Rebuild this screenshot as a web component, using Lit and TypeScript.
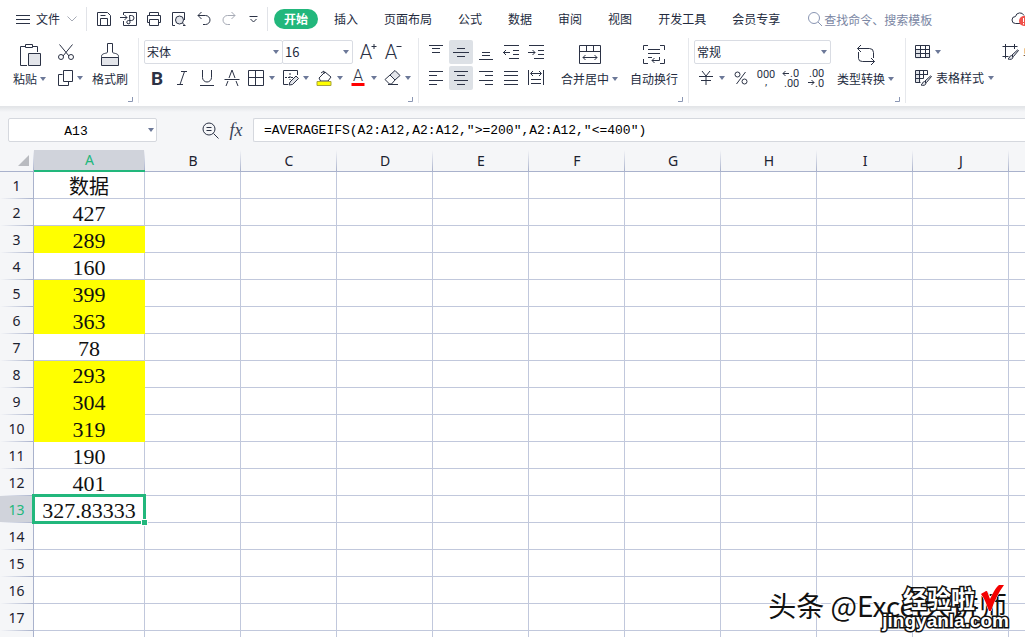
import { LitElement, html, css, svg, TemplateResult, SVGTemplateResult } from "lit";
import { customElement, property, state } from "lit/decorators.js";
import { classMap } from "lit/directives/class-map.js";

const glyph = (w: number, h: number, body: SVGTemplateResult): TemplateResult => html`
  <svg class="glyph" width=${w} height=${h} viewBox="0 0 ${w} ${h}" aria-hidden="true">${body}</svg>`;

const caret = html`<svg class="caret" width="6" height="4" viewBox="0 0 6 4" aria-hidden="true"><path d="M0 0h6L3 4z"/></svg>`;

const icons = {
  menu: glyph(14, 11, svg`<path d="M0 1.500h14M0 5.500h14M0 9.500h14"/>`),
  chevron: glyph(10, 6, svg`<path class="dim" d="M.5.5 5 5 9.5.5"/>`),
  save: glyph(16, 16, svg`<path d="M1.500 1.500h10l3 3v10h-13zM4.500 14.500v-7h7v7M4.500 4.500h5"/>`),
  exportPdf: glyph(18, 16, svg`<path d="M3.500 4V1.500h13v13h-13V10M0 6.500h7M4.500 4l2.500 2.500-2.500 2.500M9.500 4.500h2a2 2 0 0 1 0 5h-3a1.700 1.700 0 1 0 1.500 2.500z"/>`),
  print: glyph(16, 16, svg`<path d="M3.500 4.500v-3h9v3M3.500 11.500h-2v-7h13v7h-2M3.500 8.500h9v6h-9z"/>`),
  preview: glyph(16, 16, svg`<path d="M4 14.500H1.500v-13h12V9M12 14.500h2"/><circle class="soft" cx="8.500" cy="9" r="4"/><path d="m11.500 12 3 3"/>`),
  undo: glyph(16, 16, svg`<path d="M5.500 1 2 4.500 5.500 8M2 4.500h7.500a4.500 4.500 0 0 1 0 9H7"/>`),
  redo: glyph(16, 16, svg`<path class="dim" d="M10.500 1 14 4.500 10.500 8M14 4.500H6.500a4.500 4.500 0 0 0 0 9H9"/>`),
  more: glyph(9, 8, svg`<path d="M.500 1.500h8M1.500 4 4.500 7l3-3"/>`),
  search: glyph(16, 16, svg`<circle class="blue" cx="7" cy="7" r="5.500"/><path class="blue" d="m11 11 4 4"/>`),
  cloud: glyph(20, 16, svg`<path d="M9 12.500H4.500a3.500 3.500 0 0 1 0-7 4.500 4.500 0 0 1 8.500-1"/><circle class="alert" cx="13" cy="10" r="5"/><path class="alertmark" d="M12.500 7v4M12.500 12v1.500"/>`),
  paste: glyph(24, 24, svg`<path d="M9 22.500H2.500v-19h17V9"/><path class="paper" d="M7.500 1.500h7v3h-7z"/><path class="soft" d="M10.500 10.500h12v12h-12z"/>`),
  cut: glyph(18, 18, svg`<path d="M2.500 1.500 12 13M15.500 1.500 6 13"/><circle cx="4" cy="14" r="2.500"/><circle cx="14" cy="14" r="2.500"/>`),
  copy: glyph(16, 16, svg`<path d="M4.500 4.500h-4v11h10v-4M5.500.500h9v11h-9z"/>`),
  brush: glyph(20, 26, svg`<path d="M7.500 10V1.500h5V10c0 2 6 .500 6 4.500v1h-17v-1C1.500 10.500 7.500 12 7.500 10z"/><path class="soft" d="M1.500 15.500h17v8h-17z"/>`),
  bold: glyph(16, 18, svg`<text class="t-bold" x="8" y="16" text-anchor="middle">B</text>`),
  italic: glyph(16, 18, svg`<path d="M7 2.500h6M3 15.500h6M10.500 2.500l-4.500 13"/>`),
  underline: glyph(16, 18, svg`<path d="M3.500 1v7.500a4.500 4.500 0 0 0 9 0V1M1 16.500h14"/>`),
  strike: glyph(16, 18, svg`<path d="M8 1 5 9M8 1l3 8M4 12l-2 5M12 12l2 5M.500 10.500h15"/>`),
  border: glyph(16, 16, svg`<path d="M.500.500h15v15H.500zM7.500.500v15M.500 7.500h15"/>`),
  drawBorder: glyph(17, 16, svg`<path d="M15.500 5V.500h-14v14H6"/><path class="dots" d="M3 7.500h8M8 3v7"/><path class="soft" d="m8 12 6-6 2.500 2.500-6 6L7 15z"/>`),
  fill: glyph(16, 17, svg`<path d="m3 8 6-6 6 5-3 4H4.500zM5 3l3-2v3"/><path class="yellow" d="M1 11.500h14v4H1z"/>`),
  fontColor: glyph(16, 17, svg`<text class="t-small" x="8" y="11" text-anchor="middle">A</text><path class="red" d="M1.500 13h13v3h-13z"/>`),
  eraser: glyph(17, 16, svg`<path class="soft" d="m6 5 5-4.500 5 5L11 10z"/><path d="M6 5 1 9.500l4.500 4.500h2L11 10M4 14.500h10"/>`),
  bigger: glyph(18, 18, svg`<text class="t-font" x="8" y="16" text-anchor="middle">A</text><path d="M13.500 3.500h5M16 1v5"/>`),
  smaller: glyph(18, 18, svg`<text class="t-font" x="8" y="16" text-anchor="middle">A</text><path d="M13.500 3.500h5"/>`),
  top: glyph(16, 16, svg`<path d="M1 1.500h14M4 4.500h8M4 8.500h8"/>`),
  middle: glyph(16, 16, svg`<path d="M4 4.500h8M0 8.500h16M4 12.500h8"/>`),
  bottom: glyph(16, 16, svg`<path d="M4 8.500h8M4 11.500h8M1 15.500h14"/>`),
  outdent: glyph(16, 16, svg`<path d="M1 1.500h15M10 6.500h6M10 10.500h6M6 14.500h10M0 8.500h7M3 6 .500 8.500 3 11"/>`),
  indent: glyph(16, 16, svg`<path d="M1 1.500h15M10 6.500h6M10 10.500h6M6 14.500h10M0 8.500h7M4.500 6 7 8.500 4.500 11"/>`),
  left: glyph(16, 16, svg`<path d="M1 1.500h14M1 5.500h8M1 10.500h14M1 14.500h8"/>`),
  center: glyph(16, 16, svg`<path d="M1 1.500h14M4 5.500h8M1 10.500h14M4 14.500h8"/>`),
  right: glyph(16, 16, svg`<path d="M1 1.500h14M7 5.500h8M1 10.500h14M7 14.500h8"/>`),
  justify: glyph(16, 16, svg`<path d="M1 1.500h14M1 5.500h14M1 10.500h14M1 14.500h14"/>`),
  distribute: glyph(16, 16, svg`<path d="M.500 0v15M15.500 0v15M3 3.500h10M5 1 2.500 3.500 5 6M11 1l2.500 2.500L11 6M3 9.500h10M3 13.500h10"/>`),
  merge: glyph(22, 20, svg`<path d="M.500.500h21v18H.500zM.500 6.500h21M7.500.500v6M14.500.500v6M4 12.500h14M6.500 10 4 12.500 6.500 15M15.500 10l2.500 2.500-2.500 2.500"/>`),
  wrap: glyph(22, 20, svg`<path d="M5 .500H.500V5M17 .500h4.500V5M.500 14v4.500H5M21.500 14v4.500H17M5 4.500h12M5 8.500h12M5 12.500h4M16.500 12v3.500H9M11.500 13 9 15.500l2.500 2.500"/>`),
  yen: glyph(14, 16, svg`<path d="m3 1 4 5 4-5M0 6.500h14M2 10.500h10M7 6v9"/>`),
  percent: glyph(14, 14, svg`<circle cx="3.500" cy="3.500" r="2.500"/><circle cx="10.500" cy="10.500" r="2.500"/><path d="M11.500 1 2.500 13"/>`),
  thousands: glyph(20, 18, svg`<text class="t-num" x="10" y="9" text-anchor="middle">000</text><text class="t-num" x="10" y="16" text-anchor="middle">,</text>`),
  decUp: glyph(18, 18, svg`<path d="M1 4.500h6M3.500 2 1 4.500 3.500 7"/><text class="t-num" x="8" y="8">.0</text><text class="t-num" x="2" y="18">.00</text>`),
  decDown: glyph(18, 18, svg`<text class="t-num" x="2" y="8">.00</text><path d="M1 13.500h6M4.500 11 7 13.500 4.500 16"/><text class="t-num" x="8" y="18">.0</text>`),
  convert: glyph(20, 22, svg`<path d="M5 1 1.500 4.500 5 8M1.500 4.500h12q4 0 4 4V14M2.500 8v6.500q0 3 4 3h12M15 14l3.500 3.500L15 21"/>`),
  tableFmt: glyph(16, 14, svg`<path class="softfill" d="M.500 4.500h5v9h-5zM10.500 9h5v4h-5z"/><path d="M.500.500h14v12H.500zM.500 4.500h14M.500 8.500h14M5.500.500v4M10.500.500v8M5.500 4.500v8M10.500 4.500v8"/>`),
  tableStyle: glyph(17, 17, svg`<path class="softfill" d="M.500.500h5v12h-5z"/><path d="M12.500 5V.500H.500v12h5M.500 4.500h12M.500 8.500h8M4.500.500v12M8.500.500v8"/><path class="soft" d="M15.500 6 10 11l1.500 1.500 5-6zM9.500 11.500c-2 0-2 3-3.500 3.500 2 .800 5 .500 5-2z"/>`),
  cellFmt: glyph(17, 17, svg`<path d="M3.500 0v14.500M.500 2.500h15M12.500 0v5M.500 12.500h6"/><path class="soft" d="M15.500 6 10 11l1.500 1.500 5-6zM9.500 11.500c-2 0-2 3-3.500 3.500 2 .800 5 .500 5-2z"/>`),
  zoomOut: glyph(17, 17, svg`<circle cx="7" cy="7" r="6"/><path d="M4.500 5.500h5M4.500 8.500h5M11.500 11.500l5 5"/>`),
  launcher: glyph(5, 5, svg`<path class="blue" d="M4.500 0v4.500H0"/>`),
  tick: glyph(24, 28, svg`<path class="tick" d="M1 10c2-1 4-3 6-3l3 8C13 9 16 3 19 1l5 0C19 8 14 17 11 27H9C7 22 5 15 1 10z"/>`),
};

const base = css`
  *, *::before, *::after { box-sizing: border-box; }
  button, input, select { font: inherit; color: inherit; margin: 0; padding: 0; border: 0; background: none; outline: none; border-radius: 0; }
  .glyph { flex: none; display: block; fill: none; stroke: #2b3245; stroke-width: 1; overflow: visible; }
  .glyph text { stroke: none; fill: #2b3245; font-family: Roboto, "Noto Sans", sans-serif; }
  .t-bold { font-size: 19px; font-weight: 700; }
  .t-small { font-size: 16px; font-weight: 300; }
  .t-font { font-size: 20px; font-weight: 300; }
  .t-num { font-size: 11px; }
  .soft { fill: #e3e5ea; }
  .softfill { fill: #dfe2e7; stroke: none; }
  .paper { fill: #fff; }
  .dim { stroke: #a6aab5; }
  .blue { stroke: #8a96b3; }
  .dots { stroke-dasharray: 2 1; }
  .yellow { fill: #ff0; stroke: #a8a43c; }
  .red { fill: #f00; stroke: none; }
  .alert { fill: #f0524b; stroke: none; }
  .alertmark { stroke: #fff; }
  .tick { fill: #f40000; stroke: #fff; }
  .caret { flex: none; display: block; fill: #6c7898; }
`;

@customElement("tab-bar")
class TabBar extends LitElement {
  @state() private current = "开始";
  private tabs = ["开始", "插入", "页面布局", "公式", "数据", "审阅", "视图", "开发工具", "会员专享"];
  private quick: [string, TemplateResult][] = [
    ["保存", icons.save], ["输出为PDF", icons.exportPdf], ["打印", icons.print],
    ["打印预览", icons.preview], ["撤销", icons.undo], ["恢复", icons.redo], ["更多", icons.more],
  ];
  static styles = [base, css`
    :host { display: flex; align-items: center; height: 38px; padding-left: 16px; white-space: nowrap; }
    .file { display: flex; align-items: center; gap: 6px; height: 24px; flex: none; }
    .file .glyph:last-child { margin-left: 1px; }
    .rule { width: 1px; height: 24px; background: #e1e3e8; flex: none; }
    .file + .rule { margin: 0 4px 0 9px; }
    .quick { display: flex; flex: none; padding-right: 1px; }
    .quick button { display: flex; align-items: center; justify-content: center; width: 25px; height: 24px; }
    nav { display: flex; align-items: center; flex: none; margin-left: 3px; }
    nav button { height: 20px; padding: 0 13px; }
    nav .on { padding: 0 10px; margin: 0 3px; border-radius: 10px; background: #22b77c; color: #fff; font-weight: 700; }
    .search { display: flex; align-items: center; gap: 1px; margin-left: 14px; flex: none; }
    .search input { width: 140px; height: 20px; }
    .search input::placeholder { color: #7a86a3; opacity: 1; }
    .cloud { margin-left: auto; margin-right: -6px; flex: none; }
  `];
  render() {
    return html`
      <button class="file">${icons.menu}<span>文件</span>${icons.chevron}</button>
      <span class="rule"></span>
      <div class="quick">${this.quick.map(([name, icon]) => html`<button aria-label=${name}>${icon}</button>`)}</div>
      <span class="rule"></span>
      <nav>${this.tabs.map((t) => html`
        <button class=${classMap({ on: t === this.current })} @click=${() => (this.current = t)}>${t}</button>`)}
      </nav>
      <label class="search">${icons.search}<input type="search" aria-label="查找命令、搜索模板" placeholder="查找命令、搜索模板"></label>
      <button class="cloud" aria-label="云同步">${icons.cloud}</button>`;
  }
}

@customElement("tool-ribbon")
class ToolRibbon extends LitElement {
  static styles = [base, css`
    :host { display: flex; height: 68px; padding-bottom: 3px; overflow: hidden; white-space: nowrap; }
    .group { position: relative; display: flex; flex: none; padding: 2px 5px 0; border-right: 1px solid #e6e8ec; }
    .group:last-child { border-right: 0; }
    .launch { position: absolute; right: 5px; bottom: 1px; }
    .rows { display: flex; flex-direction: column; gap: 2px; }
    .row { display: flex; height: 24px; }
    .spaced { gap: 1px; }
    .tool { display: flex; align-items: center; justify-content: center; width: 24px; height: 24px; }
    .slot { width: 25px; }
    .drop { display: flex; align-items: center; width: 34px; height: 24px; }
    .drop .face { display: flex; justify-content: center; width: 24px; }
    .drop .caret { margin-left: 1px; }
    .on { background: #dde1e6; border-radius: 2px; }
    .big { display: flex; flex-direction: column; align-items: center; height: 50px; }
    .big .art { display: flex; align-items: center; height: 29px; }
    .big .name { display: flex; align-items: center; gap: 3px; height: 19px; }
    .clip { padding-left: 13px; padding-right: 10px; gap: 10px; }
    .clip .rows { margin-right: -2px; }
    .clip .drop { width: 28px; }
    .clip .drop .face, .clip .rows .tool { width: 20px; }
    .font { padding-right: 4px; }
    .align { gap: 13px; padding-right: 10px; }
    .align .big + .big { margin-left: -1px; }
    .number { padding-right: 11px; gap: 6px; }
    .pick { display: flex; align-items: center; position: relative; height: 24px; border: 1px solid #d9dce3; border-radius: 2px; }
    .pick + .pick { margin-left: -1px; }
    .pick select { appearance: none; width: 100%; height: 100%; padding-left: 2px; }
    .pick .caret { position: absolute; right: 3px; pointer-events: none; }
    .family { width: 139px; }
    .size { width: 71px; font-size: 13px; }
    .sizers { display: flex; gap: 1px; padding-left: 2px; }
    .format { width: 137px; }
    .text { display: flex; align-items: center; gap: 4px; height: 24px; padding-left: 4px; }
    .styles { gap: 4px; }
  `];
  private tool(name: string, icon: TemplateResult, cls = {}) {
    return html`<button class=${classMap({ tool: true, ...cls })} aria-label=${name}>${icon}</button>`;
  }
  private drop(name: string, icon: TemplateResult) {
    return html`<button class="drop" aria-label=${name}><span class="face">${icon}</span>${caret}</button>`;
  }
  private big(name: string, icon: TemplateResult, menu = false) {
    return html`<button class="big"><span class="art">${icon}</span><span class="name">${name}${menu ? caret : ""}</span></button>`;
  }
  private pick(cls: string, name: string, value: string) {
    return html`<label class="pick ${cls}"><select aria-label=${name}><option>${value}</option></select>${caret}</label>`;
  }
  private launch() {
    return html`<button class="launch" aria-label="更多设置">${icons.launcher}</button>`;
  }
  render() {
    return html`
      <div class="group clip">
        ${this.big("粘贴", icons.paste, true)}
        <div class="rows">${this.tool("剪切", icons.cut)}${this.drop("复制", icons.copy)}</div>
        ${this.big("格式刷", icons.brush)}
        ${this.launch()}
      </div>
      <div class="group font">
        <div class="rows">
          <div class="row">
            ${this.pick("family", "字体", "宋体")}${this.pick("size", "字号", "16")}
            <div class="sizers">${this.tool("增大字号", icons.bigger)}${this.tool("减小字号", icons.smaller)}</div>
          </div>
          <div class="row">
            ${this.tool("加粗", icons.bold, { slot: true })}${this.tool("倾斜", icons.italic, { slot: true })}
            ${this.tool("下划线", icons.underline, { slot: true })}${this.tool("删除线", icons.strike, { slot: true })}
            ${this.drop("边框", icons.border)}${this.drop("绘图边框", icons.drawBorder)}
            ${this.drop("填充颜色", icons.fill)}${this.drop("字体颜色", icons.fontColor)}${this.drop("清除", icons.eraser)}
          </div>
        </div>
        ${this.launch()}
      </div>
      <div class="group align">
        <div class="rows">
          <div class="row spaced">
            ${this.tool("顶端对齐", icons.top)}${this.tool("垂直居中", icons.middle, { on: true })}${this.tool("底端对齐", icons.bottom)}
            ${this.tool("减少缩进", icons.outdent)}${this.tool("增加缩进", icons.indent)}
          </div>
          <div class="row spaced">
            ${this.tool("左对齐", icons.left)}${this.tool("水平居中", icons.center, { on: true })}${this.tool("右对齐", icons.right)}
            ${this.tool("两端对齐", icons.justify)}${this.tool("分散对齐", icons.distribute)}
          </div>
        </div>
        ${this.big("合并居中", icons.merge, true)}${this.big("自动换行", icons.wrap)}
        ${this.launch()}
      </div>
      <div class="group number">
        <div class="rows">
          ${this.pick("format", "数字格式", "常规")}
          <div class="row spaced">
            ${this.drop("货币", icons.yen)}${this.tool("百分比", icons.percent)}
            ${this.tool("千位分隔", icons.thousands)}${this.tool("增加小数位", icons.decUp)}
            ${this.tool("减少小数位", icons.decDown)}
          </div>
        </div>
        ${this.big("类型转换", icons.convert, true)}
        ${this.launch()}
      </div>
      <div class="group styles">
        <div class="rows">
          <button class="text" aria-label="条件格式">${icons.tableFmt}${caret}</button>
          <button class="text">${icons.tableStyle}表格样式${caret}</button>
        </div>
        <div class="rows"><button class="text">${icons.cellFmt}单元格</button></div>
      </div>`;
  }
}

@customElement("formula-bar")
class FormulaBar extends LitElement {
  @property() cell = "";
  @property() formula = "";
  static styles = [base, css`
    :host { display: flex; align-items: center; height: 44px; padding: 3px 0 0 8px; background: linear-gradient(#e3e5e8, #f5f6f8 5px); border-top: 1px solid #e3e5e8; }
    .field { display: flex; align-items: center; position: relative; height: 24px; border: 1px solid #d5d8de; border-radius: 2px; background: #fff; font-family: "Liberation Mono", monospace; font-size: 13px; color: #000; }
    .field input { width: 100%; height: 100%; }
    .name { width: 149px; flex: none; }
    .name input { text-align: center; padding: 2px 13px 0 0; }
    .name .caret { position: absolute; right: 2px; }
    .tools { display: flex; align-items: center; gap: 8px; margin: 0 8px 0 45px; flex: none; }
    .fx { font: italic 18px/20px "Liberation Serif", serif; color: #3a4358; width: 18px; }
    .formula { flex: 1; border-right: 0; border-radius: 2px 0 0 2px; }
    .formula input { padding-left: 10px; }
  `];
  render() {
    return html`
      <label class="field name"><input aria-label="名称框" .value=${this.cell}>${caret}</label>
      <div class="tools"><button aria-label="浏览公式结果">${icons.zoomOut}</button><button class="fx">fx</button></div>
      <label class="field formula"><input aria-label="编辑栏" .value=${this.formula}></label>`;
  }
}

@customElement("sheet-grid")
class SheetGrid extends LitElement {
  @property({ attribute: false }) values: string[] = [];
  @property({ attribute: false }) marked: number[] = [];
  @property({ type: Number }) active = 1;
  private columns = [..."ABCDEFGHIJK"];
  static styles = [base, css`
    :host { display: block; overflow: hidden; }
    table { table-layout: fixed; width: 1105px; border-collapse: separate; border-spacing: 0; }
    .w-head { width: 34px; }
    .w-first { width: 111px; }
    .w-col { width: 96px; }
    th, td { padding: 0; text-align: center; height: 27px; border: 0 solid #c1c8dc; border-width: 0 1px 1px 0; white-space: nowrap; }
    th { font: 14px/20px "Noto Sans", sans-serif; color: #1c2230; background: #f5f6f8; border-color: #a9b2cc; }
    thead th { height: 22px; background: linear-gradient(#f5f6f8, #a9b2cc) right / 1px 100% no-repeat #f5f6f8; border-right: 0; }
    tbody th { background: linear-gradient(90deg, #f5f6f8, #a9b2cc) bottom / 100% 1px no-repeat #f5f6f8; border-bottom: 0; }
    thead .picked, tbody .picked { color: #22b77c; background-color: #d0d3db; }
    thead .picked { border-bottom: 2px solid #22b77c; }
    td { background: #fff; font: 22px/22px "Liberation Serif", "Noto Sans CJK SC", serif; color: #111; padding-top: 3px; }
    .title { font-size: 20px; }
    .marked { background: #ff0; border-color: #ff0; }
    .active { position: relative; }
    .active::before { content: ""; position: absolute; inset: -2px; border: 3px solid #22b77c; }
    .active::after { content: ""; position: absolute; right: -4px; bottom: -4px; width: 7px; height: 7px; background: #22b77c; border: 1px solid #fff; }
    .corner { display: block; width: 11px; height: 11px; margin-left: 18px; }
    .corner path { fill: #b9bbc0; stroke: none; }
  `];
  render() {
    const rows = Array.from({ length: 24 }, (_, i) => i + 1);
    return html`
      <table>
        <colgroup><col class="w-head"><col class="w-first">${this.columns.slice(1).map(() => html`<col class="w-col">`)}</colgroup>
        <thead><tr>
          <th aria-label="全选"><svg class="corner" viewBox="0 0 11 11"><path d="M11 0v11H0z"/></svg></th>
          ${this.columns.map((c) => html`<th scope="col" class=${classMap({ picked: c === "A" })}>${c}</th>`)}
        </tr></thead>
        <tbody>${rows.map((r) => html`<tr>
          <th scope="row" class=${classMap({ picked: r === this.active })}>${r}</th>
          ${this.columns.map((c, i) => html`<td class=${classMap({
            title: i === 0 && r === 1,
            marked: i === 0 && this.marked.includes(r),
            active: i === 0 && r === this.active,
          })}>${i === 0 ? this.values[r - 1] ?? "" : ""}</td>`)}
        </tr>`)}</tbody>
      </table>`;
  }
}

@customElement("app-root")
class AppRoot extends LitElement {
  static styles = [base, css`
    :host { display: flex; flex-direction: column; position: relative; height: 100vh; overflow: hidden; background: #fff; color: #232b3e; font: 12px/16px "Noto Sans CJK SC", "Noto Sans", sans-serif; }
    tab-bar, tool-ribbon, formula-bar { flex: none; }
    sheet-grid { flex: 1; min-height: 0; }
    .author { position: absolute; right: 18px; bottom: 14px; font-size: 28px; line-height: 36px; color: #111; text-shadow: -1px -1px #fff, -2px -2px #fff; white-space: nowrap; }
    .brand { position: absolute; right: 16px; bottom: 7px; display: grid; justify-items: end; color: #fff; font-weight: 700; -webkit-text-stroke: 3px #111; paint-order: stroke fill; }
    .cn { display: flex; align-items: center; gap: 5px; padding-right: 5px; font-size: 24px; line-height: 28px; }
    .site { font: 700 19px/18px "Liberation Sans", sans-serif; }
  `];
  render() {
    return html`
      <tab-bar></tab-bar>
      <tool-ribbon></tool-ribbon>
      <formula-bar cell="A13" formula=${'=AVERAGEIFS(A2:A12,A2:A12,">=200",A2:A12,"<=400")'}></formula-bar>
      <sheet-grid .active=${13} .marked=${[3, 5, 6, 8, 9, 10]}
        .values=${["数据", "427", "289", "160", "399", "363", "78", "293", "304", "319", "190", "401", "327.83333"]}></sheet-grid>
      <div class="author">头条 @Excel大讲师</div>
      <div class="brand"><span class="cn">经验啦${icons.tick}</span><span class="site">jingyanla.com</span></div>`;
  }
}
